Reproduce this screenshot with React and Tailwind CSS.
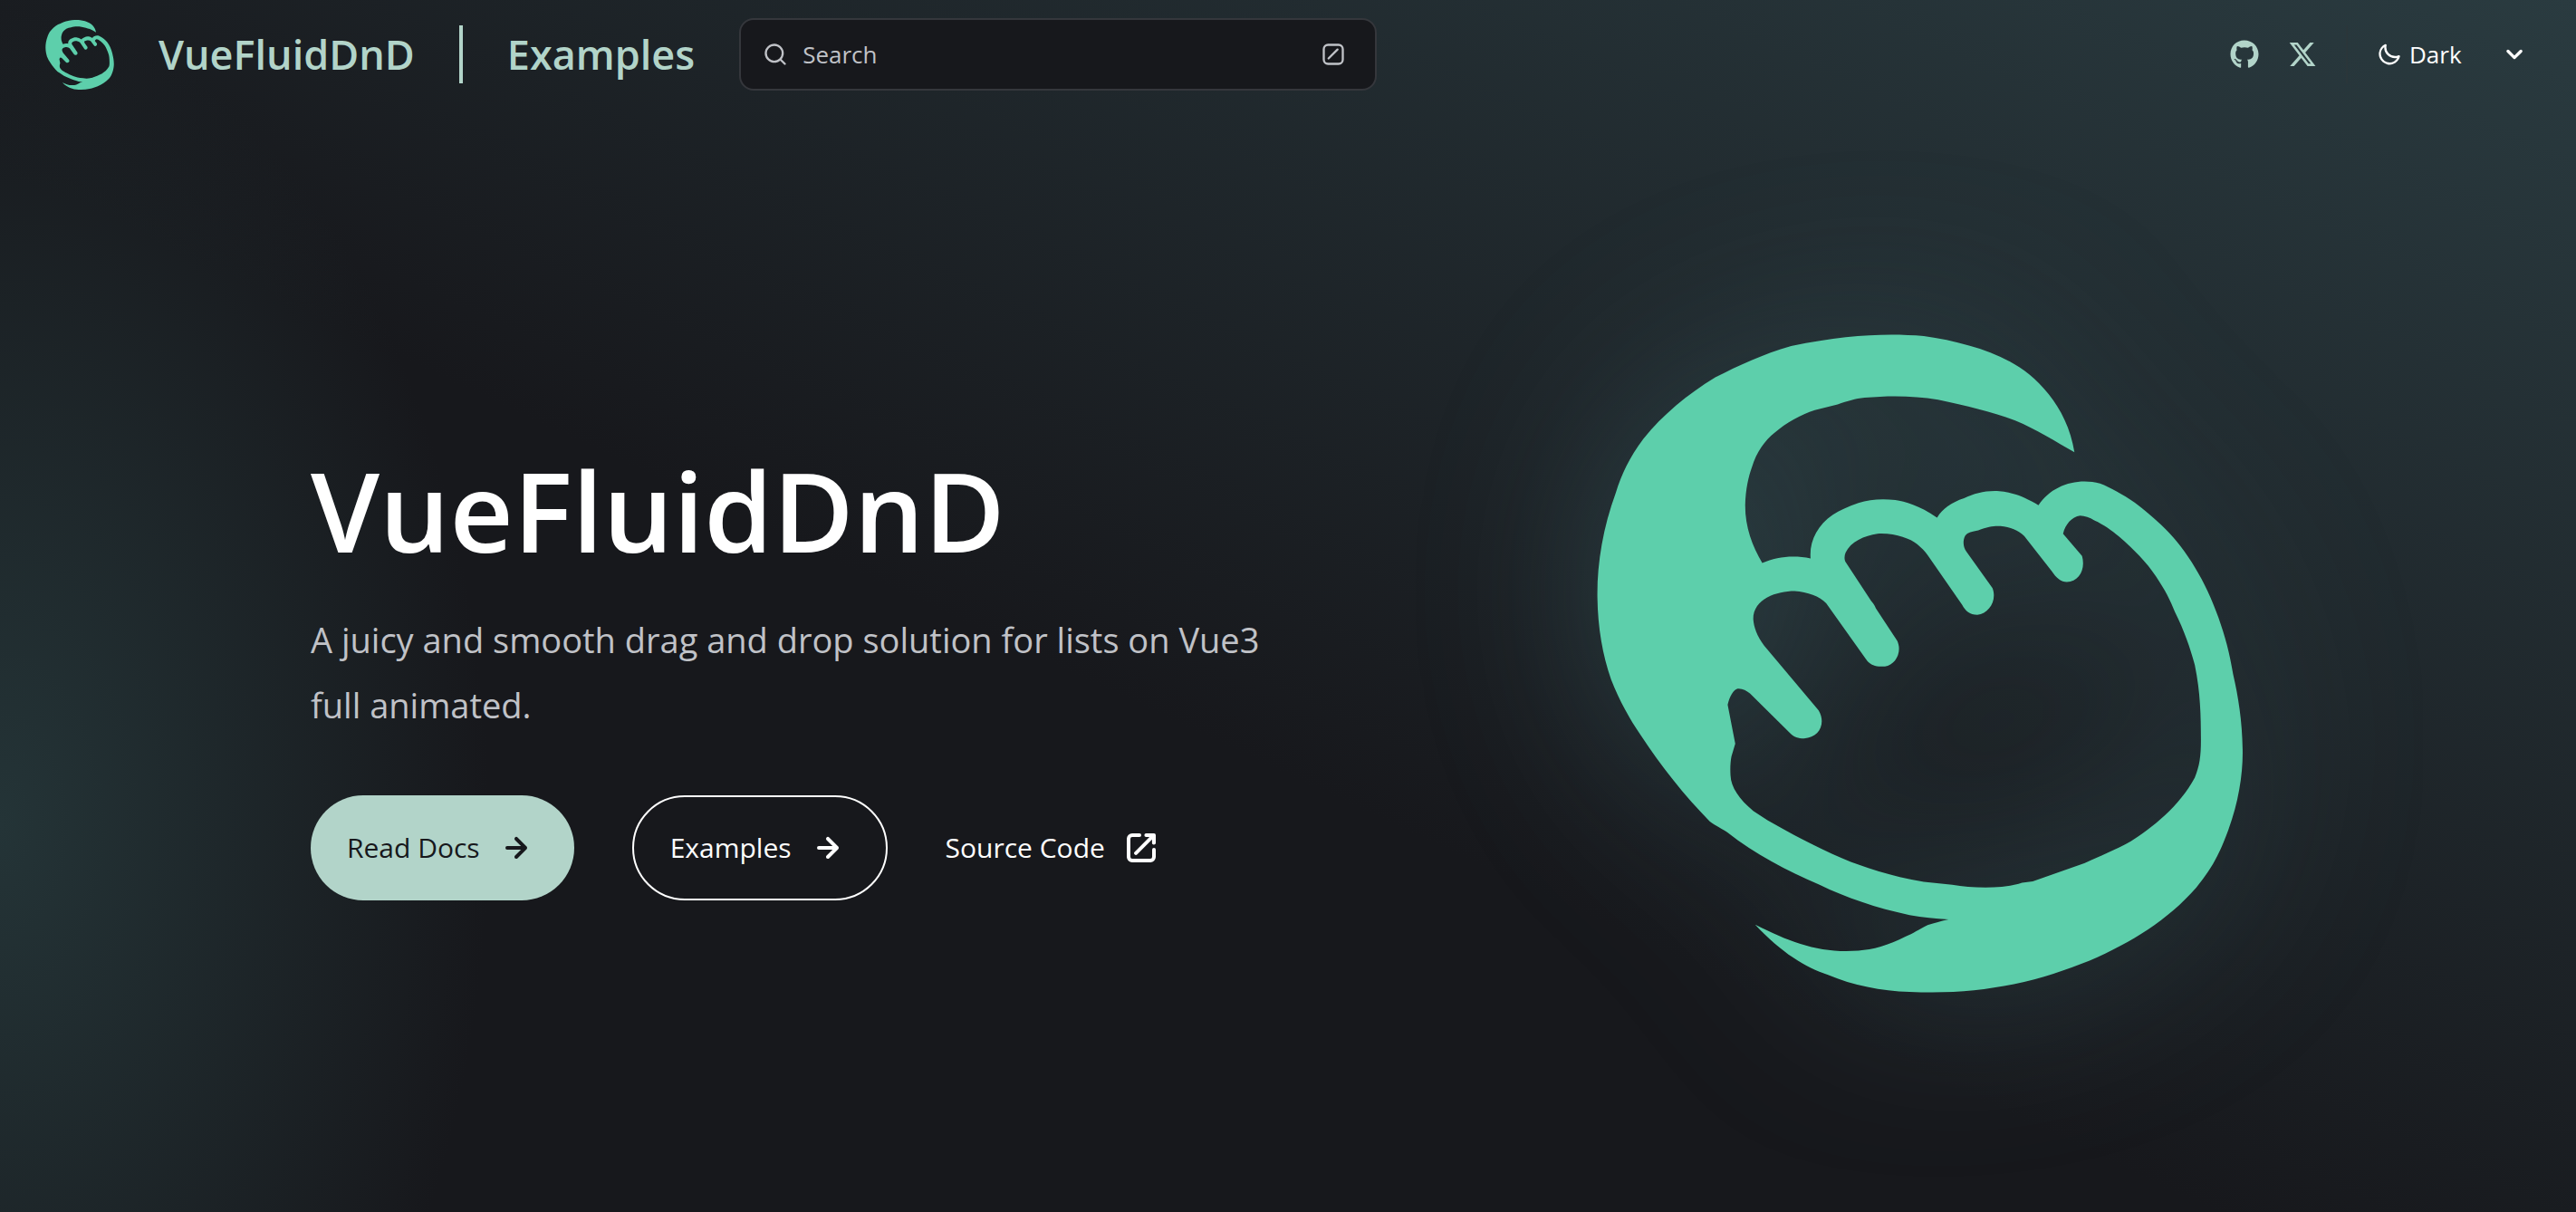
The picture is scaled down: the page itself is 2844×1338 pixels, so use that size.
import { FaGithub } from "react-icons/fa";

function Logo({ className }) {
  return (
    <svg viewBox="120 94 1363 1390" className={className} fill="#5dcfab" aria-hidden="true">
      <path
        fillRule="evenodd"
        d="M1128 343C1113 245 1044 179 992 152C940 124 874 107 810 98C735 92 650 94 530 119C470 136 420 160 370 185C310 222 260 263 218 315C188 355 172 390 160 428C132 505 120 580 121 650C122 715 132 770 150 823C168 868 188 905 213 941C255 1005 305 1068 358 1122C372 1133 386 1138 395 1145C455 1192 520 1226 590 1256C645 1283 710 1305 780 1320C808 1325 835 1327 862 1329C845 1333 830 1337 818 1341C800 1350 787 1359 772 1365C735 1384 702 1393 672 1395C590 1401 530 1378 454 1340C510 1400 560 1430 608 1446C660 1468 720 1480 780 1482C860 1486 930 1480 1000 1466C1060 1453 1110 1436 1160 1416C1250 1377 1325 1330 1385 1262C1425 1215 1440 1175 1453 1140C1475 1080 1484 1020 1483 970C1482 910 1474 860 1463 812C1455 765 1447 735 1432 692C1405 615 1365 550 1320 505C1295 480 1273 463 1255 449C1228 431 1205 418 1182 409C1135 396 1080 412 1052 455C1010 430 985 426 960 425C935 425 915 431 895 440C868 449 850 462 838 481C800 455 770 447 750 444C720 441 695 443 672 450C650 457 632 466 618 475C585 497 568 532 571 567C535 560 500 563 469 577C448 540 433 503 433 455C434 420 440 395 447 375C457 342 475 318 495 302C520 280 550 264 580 254L628 242C650 235 665 230 685 228C740 223 790 224 840 232C900 245 950 256 1003 276C1048 295 1088 320 1128 343ZM450 695C450 652 500 636 537 636C565 638 590 647 604 662L688 780C694 789 704 795 715 795L728 795C750 792 765 765 754 741L709 673C706 665 702 660 699 657L645 575C642 570 642 562 645 555C655 532 685 519 712 515C750 513 780 525 796 537C805 545 812 551 818 560L891 665C898 678 907 686 923 686C948 684 965 655 955 630L900 553C893 543 892 530 897 520C903 511 912 511 925 508C945 500 960 498 972 499C992 501 1010 508 1022 520L1080 594C1089 608 1100 617 1112 617C1138 615 1152 590 1144 562L1104 515C1109 495 1122 480 1140 477C1150 477 1160 481 1170 487C1190 496 1208 509 1222 521C1255 550 1280 575 1300 605C1320 635 1330 655 1340 680C1360 720 1372 755 1382 792C1394 850 1395 900 1395 950C1395 985 1392 1005 1382 1030C1350 1090 1290 1138 1247 1164C1215 1182 1180 1196 1150 1210L1040 1249C1030 1251 1020 1250 1010 1254C960 1266 910 1262 870 1256L810 1250C740 1238 680 1218 640 1201C580 1176 530 1148 480 1120L450 1100C420 1075 403 1050 402 1025C401 1010 402 995 404 985L412 958L396 876C400 858 408 845 417 842C427 841 435 846 443 852L528 936C536 944 545 947 557 947C590 945 604 915 588 888L473 751C458 732 451 712 450 695Z"
      />
    </svg>
  );
}

function Icon({ className, children }) {
  return (
    <svg viewBox="0 0 24 24" className={className} fill="currentColor" aria-hidden="true">
      {children}
    </svg>
  );
}

function SearchIcon() {
  return (
    <Icon className="size-7">
      <path d="M21.71 20.29 18 16.61A9 9 0 1 0 16.61 18l3.68 3.68a1 1 0 0 0 1.42 0 1 1 0 0 0 0-1.39ZM11 18a7 7 0 1 1 0-14 7 7 0 0 1 0 14Z" />
    </Icon>
  );
}

function SlashKeyIcon() {
  return (
    <Icon className="size-7">
      <path d="M17 2H7a5 5 0 0 0-5 5v10a5 5 0 0 0 5 5h10a5 5 0 0 0 5-5V7a5 5 0 0 0-5-5Zm3 15a3 3 0 0 1-3 3H7a3 3 0 0 1-3-3V7a3 3 0 0 1 3-3h10a3 3 0 0 1 3 3v10Z" />
      <path d="M15.293 6.707a1 1 0 1 1 1.414 1.414l-8.485 8.486a1 1 0 0 1-1.414-1.415l8.485-8.485Z" />
    </Icon>
  );
}

function XIcon() {
  return (
    <Icon className="size-8">
      <path d="M18.244 2.25h3.308l-7.227 8.26 8.502 11.24H16.17l-5.214-6.817L4.99 21.75H1.68l7.73-8.835L1.254 2.25H8.08l4.713 6.231zm-1.161 17.52h1.833L7.084 4.126H5.117z" />
    </Icon>
  );
}

function MoonIcon() {
  return (
    <Icon className="size-7">
      <path d="M21.64 13a1 1 0 0 0-1.05-.14 8.049 8.049 0 0 1-3.37.73 8.15 8.15 0 0 1-8.14-8.1 8.59 8.59 0 0 1 .25-2A1 1 0 0 0 8 2.36a10.14 10.14 0 1 0 14 11.69 1 1 0 0 0-.36-1.05Zm-9.5 6.69A8.14 8.14 0 0 1 7.08 5.22v.27a10.15 10.15 0 0 0 10.14 10.14 9.784 9.784 0 0 0 2.1-.22 8.11 8.11 0 0 1-7.18 4.32v-.04Z" />
    </Icon>
  );
}

function CaretIcon() {
  return (
    <Icon className="size-10">
      <path d="M17 9.17a1 1 0 0 0-1.41 0L12 12.71 8.46 9.17a1 1 0 1 0-1.41 1.42l4.24 4.24a1.002 1.002 0 0 0 1.42 0L17 10.59a1.002 1.002 0 0 0 0-1.42Z" />
    </Icon>
  );
}

function ArrowIcon() {
  return (
    <Icon className="size-12">
      <path d="M17.92 11.62a1.001 1.001 0 0 0-.21-.33l-5-5a1.003 1.003 0 1 0-1.42 1.42l3.3 3.29H7a1 1 0 0 0 0 2h7.59l-3.3 3.29a1.002 1.002 0 0 0 .325 1.639 1 1 0 0 0 1.095-.219l5-5a1 1 0 0 0 .21-.33 1 1 0 0 0 0-.76Z" />
    </Icon>
  );
}

function ExternalIcon() {
  return (
    <Icon className="size-12">
      <path d="M19.33 10.18a1 1 0 0 1-.77 0 1 1 0 0 1-.62-.93l.01-1.83-8.2 8.2a1 1 0 0 1-1.41-1.42l8.2-8.2H14.7a1 1 0 0 1 0-2H19a1 1 0 0 1 1 1v4.25a1 1 0 0 1-.67.93Z" />
      <path d="M11 4a1 1 0 1 1 0 2H7a1 1 0 0 0-1 1v10a1 1 0 0 0 1 1h10a1 1 0 0 0 1-1v-4a1 1 0 1 1 2 0v4a3 3 0 0 1-3 3H7a3 3 0 0 1-3-3V7a3 3 0 0 1 3-3h4Z" />
    </Icon>
  );
}

function Header() {
  return (
    <header className="flex h-[120px] items-center justify-between gap-8 pr-12 pl-[50px] text-[#b2d4c9]">
      <div className="flex items-center gap-[49px]">
        <a href="#home" className="flex items-center gap-[49px] text-[45px] font-semibold">
          <Logo className="h-[77px] w-[76px]" />
          VueFluidDnD
        </a>
        <span className="h-16 w-1 bg-[#b2d4c9]" />
        <a href="#examples" className="text-[45px] font-semibold">Examples</a>
        <button
          type="button"
          className="flex h-20 w-[704px] items-center gap-4 rounded-2xl border-2 border-[#35373c] bg-[#17181c] pr-8 pl-6 text-[26px] text-[#c0c2c7]"
        >
          <SearchIcon />
          <span className="grow text-left">Search</span>
          <SlashKeyIcon />
        </button>
      </div>
      <div className="flex items-center">
        <a href="#github" aria-label="GitHub"><FaGithub className="size-8" /></a>
        <a href="#x" aria-label="X" className="ml-8"><XIcon /></a>
        <span className="mx-8 h-16 w-0.5 bg-[#2b363a]" />
        <div className="flex items-center gap-2 text-[26px] text-white">
          <MoonIcon />
          <select aria-label="Select theme" className="w-[88px] appearance-none bg-transparent" defaultValue="Dark">
            <option>Dark</option>
            <option>Light</option>
            <option>Auto</option>
          </select>
          <CaretIcon />
        </div>
      </div>
    </header>
  );
}

function Hero() {
  return (
    <main className="grid grid-cols-[1104px_1fr] items-center gap-16 pt-[249px] pr-[368px] pb-[242px] pl-[343px]">
      <div className="pt-4">
        <h1 className="text-[122px] leading-[150px] font-semibold text-white">VueFluidDnD</h1>
        <p className="mt-8 text-[38px] leading-[72px] text-[#c0c2c7]">
          A juicy and smooth drag and drop solution for lists on Vue3 full animated.
        </p>
        <div className="mt-16 flex items-center gap-16 text-[30px] text-white">
          <a href="#docs" className="flex h-[116px] items-center gap-4 rounded-full bg-[#b2d4c9] px-10 text-[#17181c]">
            Read Docs <ArrowIcon />
          </a>
          <a href="#examples" className="flex h-[116px] items-center gap-4 rounded-full border-2 border-white px-10">
            Examples <ArrowIcon />
          </a>
          <a href="#source" className="flex h-[116px] items-center gap-4">
            Source Code <ExternalIcon />
          </a>
        </div>
      </div>
      <Logo className="ml-auto h-[727px] w-[713px] drop-shadow-[0_0_96px_rgba(80,135,140,0.32)]" />
    </main>
  );
}

export default function App() {
  return (
    <div className="min-h-screen bg-[#17181c] bg-[radial-gradient(ellipse_540px_900px_at_0%_68%,#243437_0%,#24343700_100%),linear-gradient(to_top_right,#17181c_43%,#2a3b40_100%)] font-['Open_Sans',sans-serif]">
      <Header />
      <Hero />
    </div>
  );
}
